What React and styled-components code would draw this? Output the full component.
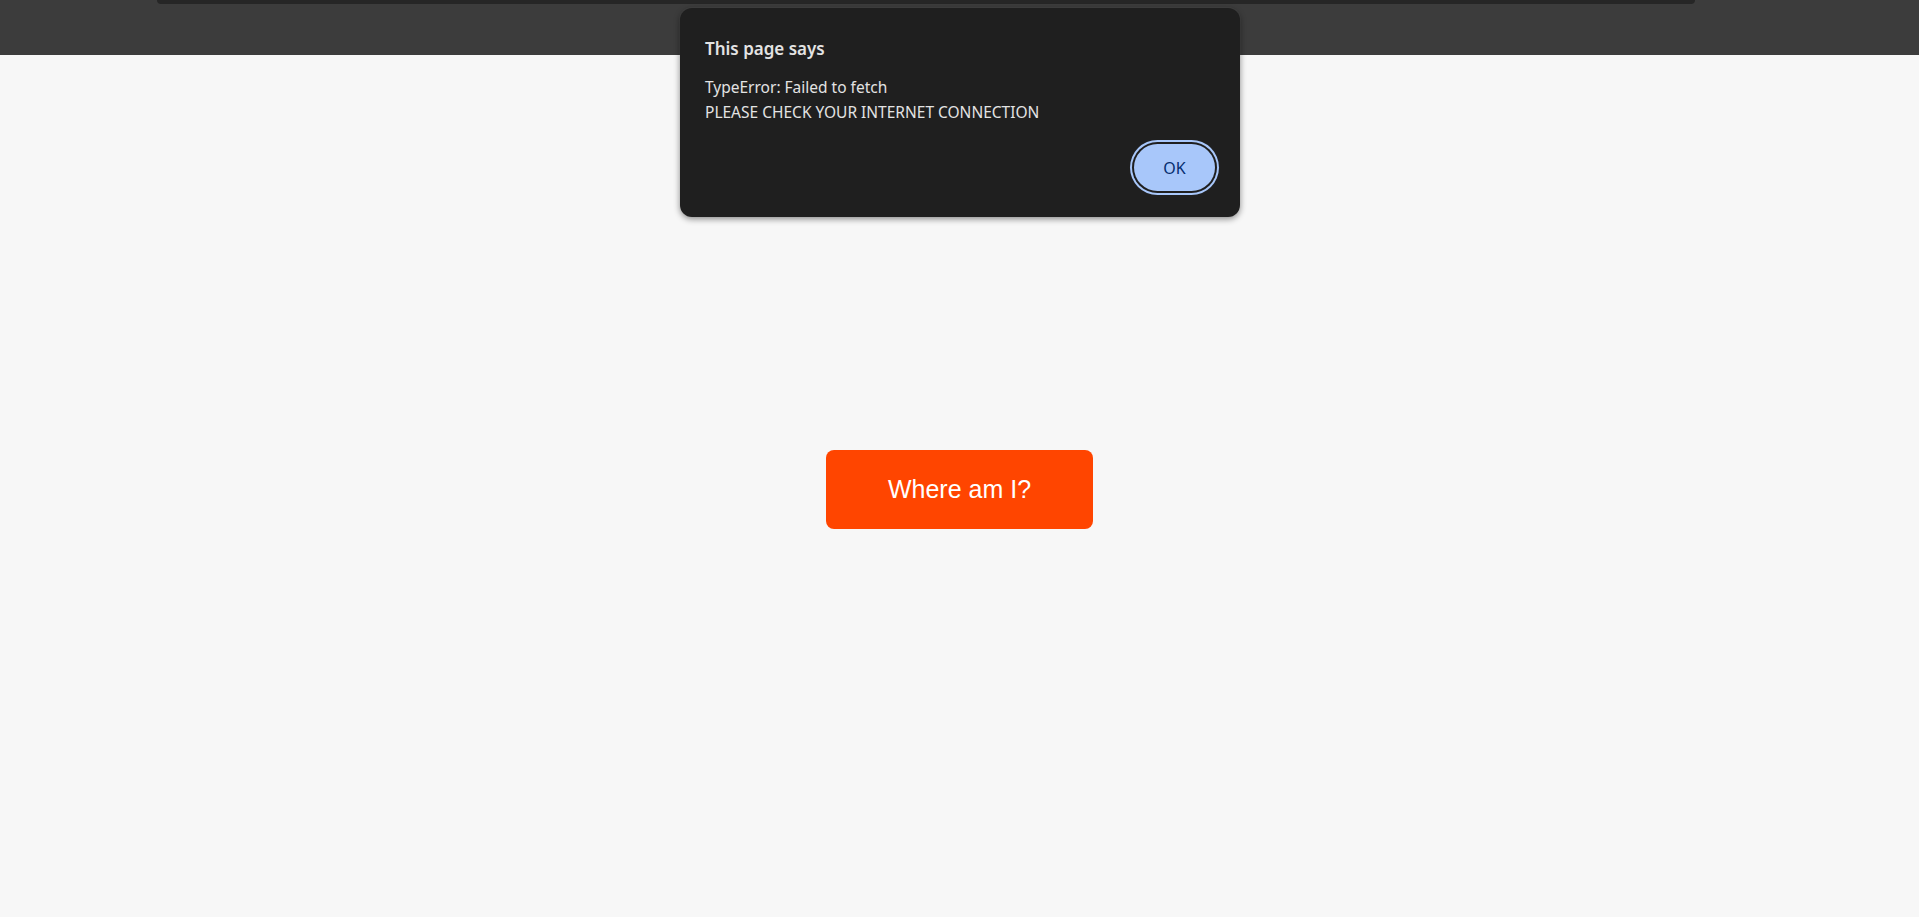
import React from 'react';
import styled, { createGlobalStyle } from 'styled-components';

const GlobalStyle = createGlobalStyle`
  html, body {
    margin: 0;
    padding: 0;
    background: #f7f7f7;
    font-family: "Liberation Sans", Arial, sans-serif;
  }
`;

const Page = styled.div`
  position: relative;
  min-height: 100vh;
  display: flex;
  flex-direction: column;
`;

const TopBar = styled.header`
  height: 55px;
  background-color: #3c3c3c;
  display: flex;
  align-items: flex-start;
`;

const TopStrip = styled.div`
  margin-left: 157px;
  width: 1538px;
  height: 4px;
  background-color: #262626;
  border-radius: 0 0 7px 7px;
`;

const Main = styled.main`
  flex: 1;
  display: flex;
  align-items: center;
  justify-content: center;
  padding-top: 7px;
`;

const LocateButton = styled.button`
  width: 267px;
  height: 79px;
  border: none;
  border-radius: 8px;
  background-color: #ff4500;
  color: #ffffff;
  font-family: "Liberation Sans", Arial, sans-serif;
  font-size: 25px;
  cursor: pointer;
`;

const Dialog = styled.div`
  position: absolute;
  top: 8px;
  left: 680px;
  width: 560px;
  box-sizing: border-box;
  padding: 29px 25px 26px 25px;
  background-color: #1f1f1f;
  border-radius: 12px;
  box-shadow: 0 2px 6px rgba(0, 0, 0, 0.45), 0 0 0 1px rgba(255, 255, 255, 0.04);
  font-family: "Noto Sans", "Open Sans", sans-serif;
  color: #e3e3e3;
`;

const DialogTitle = styled.div`
  font-size: 17px;
  font-weight: 600;
  line-height: 24px;
  margin-bottom: 14px;
`;

const DialogText = styled.div`
  font-size: 15.5px;
  line-height: 25px;
`;

const DialogActions = styled.div`
  display: flex;
  justify-content: flex-end;
  margin-top: 19px;
`;

const OkButton = styled.button`
  width: 81px;
  height: 47px;
  margin: 0;
  border: none;
  border-radius: 999px;
  background-color: #a8c7fa;
  color: #062e6f;
  font-family: "Noto Sans", "Open Sans", sans-serif;
  font-size: 16px;
  box-shadow: 0 0 0 2px #1f1f1f, 0 0 0 4px #a8c7fa;
  cursor: pointer;
`;

const App = () => {
  return (
    <Page>
      <GlobalStyle />
      <TopBar>
        <TopStrip />
      </TopBar>
      <Main>
        <LocateButton>Where am I?</LocateButton>
      </Main>
      <Dialog role="alertdialog">
        <DialogTitle>This page says</DialogTitle>
        <DialogText>
          TypeError: Failed to fetch
          <br />
          PLEASE CHECK YOUR INTERNET CONNECTION
        </DialogText>
        <DialogActions>
          <OkButton>OK</OkButton>
        </DialogActions>
      </Dialog>
    </Page>
  );
};

export default App;
